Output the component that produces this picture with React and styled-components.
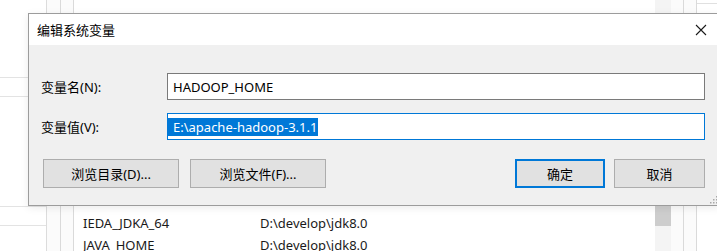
import styled, { createGlobalStyle } from 'styled-components';

const GlobalStyle = createGlobalStyle`
  html, body {
    margin: 0;
    padding: 0;
    width: 717px;
    height: 251px;
    overflow: hidden;
    background: #ffffff;
    font-family: "Noto Sans", "Noto Sans CJK SC", sans-serif;
    font-size: 13px;
    color: #000;
  }
`;

const envRows = [
  { name: 'IEDA_JDKA_64', value: 'D:\\develop\\jdk8.0' },
  { name: 'JAVA_HOME', value: 'D:\\develop\\jdk8.0' },
];

const App = () => (
  <>
    <GlobalStyle />
    <Desktop>
      <SidePane>
        <SideItem $h={77} />
        <SideItem $h={18} />
        <SideItem $h={109} />
        <SideItem $h={18} />
      </SidePane>
      <Gutter>
        <GutterCol />
        <GutterCol />
      </Gutter>
      <ListPane>
        {envRows.map((row) => (
          <ListRow key={row.name}>
            <ListName>{row.name}</ListName>
            <ListValue>{row.value}</ListValue>
          </ListRow>
        ))}
      </ListPane>
      <ScrollTrack>
        <ScrollThumb />
      </ScrollTrack>
      <Gutter $wide>
        <GutterCol />
        <GutterCol />
      </Gutter>
      <RightPane />

      <Dialog>
        <TitleBar>
          <Title>编辑系统变量</Title>
          <CloseButton aria-label="close">
            <svg width="12" height="12" viewBox="0 0 12 12">
              <path d="M1 1L11 11M11 1L1 11" stroke="#1a1a1a" strokeWidth="1.1" fill="none" />
            </svg>
          </CloseButton>
        </TitleBar>
        <Body>
          <Form>
            <Label>变量名(N):</Label>
            <Field>HADOOP_HOME</Field>
            <Label>变量值(V):</Label>
            <Field $focused>
              <Selected>E:\apache-hadoop-3.1.1</Selected>
            </Field>
          </Form>
          <ButtonRow>
            <Button $w={136}>浏览目录(D)...</Button>
            <Button $w={136}>浏览文件(F)...</Button>
            <Spacer />
            <Button $w={90} $default>确定</Button>
            <Button $w={91} $tight>取消</Button>
          </ButtonRow>
          <Grip>
            <svg width="10" height="10" viewBox="0 0 10 10">
              {[[8, 2], [5, 5], [8, 5], [2, 8], [5, 8], [8, 8]].map(([x, y]) => (
                <rect key={`${x}-${y}`} x={x} y={y} width="1.5" height="1.5" fill="#a8a8a8" />
              ))}
            </svg>
          </Grip>
        </Body>
      </Dialog>
    </Desktop>
  </>
);

const Desktop = styled.div`
  position: relative;
  display: flex;
  width: 717px;
  height: 251px;
  overflow: hidden;
  background: #fff;
`;

const SidePane = styled.div`
  width: 46px;
  display: flex;
  flex-direction: column;
  border-right: 1px solid #dcdcdc;
`;

const SideItem = styled.div`
  height: ${(p) => p.$h}px;
  border-bottom: 1px solid #e3e3e3;
  flex-shrink: 0;
`;

const Gutter = styled.div`
  width: ${(p) => (p.$wide ? 26 : 27)}px;
  display: flex;
  background: #fbfbfb;
`;

const GutterCol = styled.div`
  flex: 1;
  border-right: 1px solid #dadada;
`;

const ListPane = styled.div`
  width: 581px;
  padding-top: 212px;
  box-sizing: border-box;
  display: flex;
  flex-direction: column;
`;

const ListRow = styled.div`
  display: flex;
  align-items: center;
  height: 22px;
  padding-left: 9px;
  flex-shrink: 0;
`;

const ListName = styled.span`
  width: 177px;
  color: #1a1a1a;
`;

const ListValue = styled.span`
  color: #1a1a1a;
`;

const ScrollTrack = styled.div`
  width: 16px;
  background: #f4f4f4;
  padding-top: 180px;
  box-sizing: border-box;
`;

const ScrollThumb = styled.div`
  height: 46px;
  background: #cdcdcd;
`;

const RightPane = styled.div`
  flex: 1;
  border-top: 1px solid #e0e0e0;
  margin-top: 3px;
`;

const Dialog = styled.div`
  position: absolute;
  left: 28px;
  top: 13px;
  width: 692px;
  height: 193px;
  box-sizing: border-box;
  border: 1px solid #9c9c9c;
  background: #f0f0f0;
  display: flex;
  flex-direction: column;
  box-shadow: 0 2px 8px rgba(0, 0, 0, 0.08);
`;

const TitleBar = styled.div`
  height: 31px;
  flex-shrink: 0;
  background: #fff;
  display: flex;
  align-items: center;
  justify-content: space-between;
  padding: 0 12px 0 8px;
`;

const Title = styled.span`
  font-family: "Noto Sans CJK SC", sans-serif;
  font-size: 13px;
  color: #000;
`;

const CloseButton = styled.div`
  width: 12px;
  height: 12px;
  display: flex;
  margin-top: 1px;
`;

const Body = styled.div`
  position: relative;
  flex: 1;
  padding: 28px 14px 0 12px;
`;

const Form = styled.div`
  display: grid;
  grid-template-columns: 126px 538px;
  row-gap: 13px;
  align-items: center;
`;

const Label = styled.span`
  color: #000;
`;

const Field = styled.div`
  height: 27px;
  box-sizing: border-box;
  border: 1px solid ${(p) => (p.$focused ? '#0078d7' : '#7a7a7a')};
  background: #fff;
  display: flex;
  align-items: center;
  padding-left: 5px;
  color: #000;
`;

const Selected = styled.span`
  background: #0078d7;
  color: #fff;
  line-height: 18px;
  margin-left: -5px;
  padding: 0 1px 0 5px;
`;

const ButtonRow = styled.div`
  display: flex;
  align-items: center;
  margin-top: 19px;
  padding-left: 2px;
  gap: 11px;
`;

const Spacer = styled.div`
  flex: 1;
`;

const Button = styled.div`
  width: ${(p) => p.$w}px;
  height: 29px;
  box-sizing: border-box;
  border: ${(p) => (p.$default ? '2px solid #0078d7' : '1px solid #adadad')};
  background: #e1e1e1;
  display: flex;
  align-items: center;
  justify-content: center;
  color: #000;
  margin-left: ${(p) => (p.$tight ? -2 : 0)}px;
`;

const Grip = styled.div`
  position: absolute;
  right: 1px;
  bottom: 1px;
  width: 10px;
  height: 10px;
  display: flex;
`;

export default App;
